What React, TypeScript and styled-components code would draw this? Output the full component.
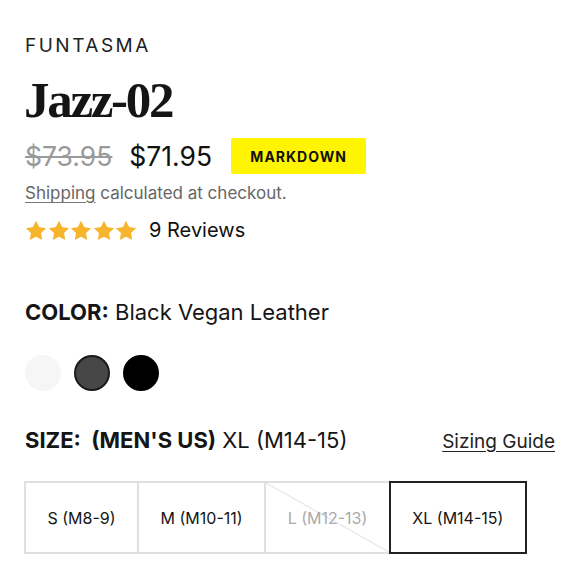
import { FC } from "react";
import styled, { createGlobalStyle } from "styled-components";

const GlobalStyle = createGlobalStyle`
  body {
    margin: 0;
    background: #fff;
    font-family: Inter, "Liberation Sans", sans-serif;
    color: #111;
  }
`;

const sizes = [
  { label: "S (M8-9)", disabled: false, selected: false },
  { label: "M (M10-11)", disabled: false, selected: false },
  { label: "L (M12-13)", disabled: true, selected: false },
  { label: "XL (M14-15)", disabled: false, selected: true },
];

const swatches = [
  { color: "#f6f6f6", border: "#f6f6f6" },
  { color: "#474747", border: "#1a1a1a" },
  { color: "#000", border: "#000" },
];

const Star: FC = () => (
  <svg width="22" height="21" viewBox="0 0 24 23">
    <path
      d="M12 0.8l3.4 7 7.7 1.1-5.6 5.4 1.3 7.7L12 18.4l-6.8 3.6 1.3-7.7L0.9 8.9l7.7-1.1z"
      fill="#f7b52e"
    />
  </svg>
);

const App: FC = () => {
  return (
    <Page>
      <GlobalStyle />
      <Vendor>FUNTASMA</Vendor>
      <Title>Jazz-02</Title>
      <PriceRow>
        <OldPrice>$73.95</OldPrice>
        <Price>$71.95</Price>
        <Badge>MARKDOWN</Badge>
      </PriceRow>
      <Shipping>
        <u>Shipping</u> calculated at checkout.
      </Shipping>
      <ReviewRow>
        <Stars>
          {[0, 1, 2, 3, 4].map((i) => (
            <Star key={i} />
          ))}
        </Stars>
        <Reviews>9 Reviews</Reviews>
      </ReviewRow>
      <OptionLabel>
        <b>COLOR:</b> Black Vegan Leather
      </OptionLabel>
      <Swatches>
        {swatches.map((s) => (
          <Swatch key={s.color} $color={s.color} $border={s.border} />
        ))}
      </Swatches>
      <SizeHeader>
        <SizeLabel>
          <b>SIZE:&nbsp; (MEN'S US)</b> XL (M14-15)
        </SizeLabel>
        <GuideLink>Sizing Guide</GuideLink>
      </SizeHeader>
      <SizeRow>
        {sizes.map((s) => (
          <SizeButton
            key={s.label}
            $disabled={s.disabled}
            $selected={s.selected}
          >
            {s.label}
          </SizeButton>
        ))}
      </SizeRow>
    </Page>
  );
};

export default App;

const Page = styled.div`
  width: 580px;
  height: 580px;
  box-sizing: border-box;
  padding: 34px 25px 0 25px;
  overflow: hidden;
`;

const Vendor = styled.div`
  font-size: 19px;
  letter-spacing: 2.5px;
  line-height: 24px;
  color: #222;
`;

const Title = styled.h1`
  margin: 16px 0 0 -1px;
  font-family: "Liberation Serif", serif;
  font-weight: 700;
  font-size: 51px;
  letter-spacing: -2.3px;
  line-height: 52px;
  color: #151515;
`;

const PriceRow = styled.div`
  display: flex;
  align-items: center;
  margin-top: 12px;
`;

const OldPrice = styled.span`
  font-size: 26.5px;
  color: #9a9a9a;
  text-decoration: line-through;
  text-decoration-thickness: 2px;
`;

const Price = styled.span`
  margin-left: 17px;
  font-size: 26.5px;
  color: #111;
`;

const Badge = styled.span`
  margin-left: 19px;
  width: 135px;
  height: 36px;
  display: flex;
  align-items: center;
  justify-content: center;
  background: #fff500;
  border-radius: 2px;
  font-size: 14px;
  font-weight: 700;
  letter-spacing: 1px;
  color: #111;
`;

const Shipping = styled.div`
  margin-top: 9px;
  font-size: 17px;
  color: #666;
  u {
    text-decoration-color: #777;
    text-underline-offset: 3px;
  }
`;

const ReviewRow = styled.div`
  display: flex;
  align-items: center;
  margin-top: 15px;
`;

const Stars = styled.div`
  display: flex;
  gap: 0.5px;
`;

const Reviews = styled.span`
  margin-left: 12px;
  font-size: 20px;
  color: #111;
`;

const OptionLabel = styled.div`
  margin-top: 57px;
  font-size: 22px;
  color: #151515;
  b {
    font-weight: 700;
  }
`;

const Swatches = styled.div`
  display: flex;
  gap: 13px;
  margin-top: 30px;
`;

const Swatch = styled.span<{ $color: string; $border: string }>`
  width: 36px;
  height: 36px;
  border-radius: 50%;
  box-sizing: border-box;
  background: ${(p) => p.$color};
  border: 2px solid ${(p) => p.$border};
`;

const SizeHeader = styled.div`
  display: flex;
  justify-content: space-between;
  align-items: baseline;
  margin-top: 36px;
`;

const SizeLabel = styled.div`
  font-size: 22px;
  color: #151515;
  b {
    font-weight: 700;
  }
`;

const GuideLink = styled.a`
  font-size: 19px;
  color: #222;
  text-decoration: underline;
  text-underline-offset: 3px;
`;

const SizeRow = styled.div`
  display: flex;
  margin-top: 28px;
  margin-left: -1px;
`;

const SizeButton = styled.div<{ $disabled: boolean; $selected: boolean }>`
  position: relative;
  flex-shrink: 0;
  height: 73px;
  box-sizing: border-box;
  display: flex;
  align-items: center;
  padding: 0 21.5px;
  margin-left: -2px;
  font-size: 16px;
  white-space: nowrap;
  border: 2px solid ${(p) => (p.$selected ? "#222" : "#e0e0e0")};
  z-index: ${(p) => (p.$selected ? 1 : 0)};
  color: ${(p) => (p.$disabled ? "#aaa" : "#151515")};
  background: ${(p) =>
    p.$disabled
      ? "linear-gradient(to top right, transparent calc(50% - 1px), #e2e2e2 50%, transparent calc(50% + 1px))"
      : "#fff"};
  &:first-child {
    margin-left: 0;
  }
`;
